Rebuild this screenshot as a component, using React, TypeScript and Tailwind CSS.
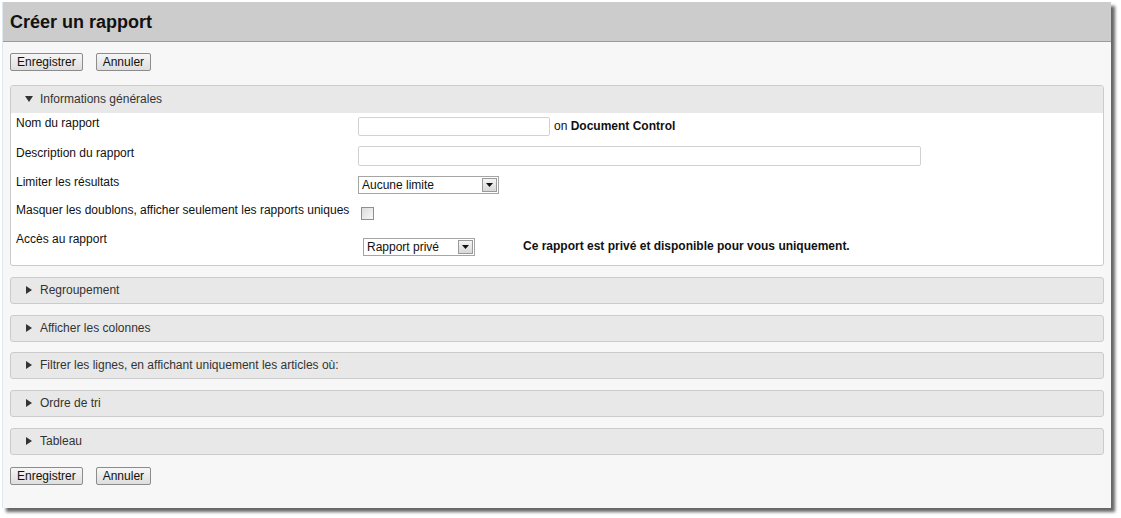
import React from "react";

const font = { fontFamily: '"Liberation Sans", Arial, sans-serif' };

function Btn({ children }: { children: React.ReactNode }) {
  return (
    <button className="h-[18px] px-[6px] text-[12px] leading-[14px] text-[#111] border border-[#8c8c8c] rounded-[2px] bg-gradient-to-b from-[#f6f6f6] to-[#dedede]">
      {children}
    </button>
  );
}

function Select({ label, w }: { label: string; w: string }) {
  return (
    <div className={`${w} h-[18px] flex items-center justify-between border border-[#a5a5a5] bg-white pl-[3px] pr-[1px]`}>
      <span className="text-[12px] leading-[14px] text-[#111]">{label}</span>
      <span className="w-[15px] h-[14px] border border-[#9a9a9a] bg-gradient-to-b from-[#f4f4f4] to-[#d8d8d8] flex items-center justify-center">
        <svg width="7" height="4" viewBox="0 0 7 4"><path d="M0 0h7L3.5 4z" fill="#111" /></svg>
      </span>
    </div>
  );
}

function Collapsed({ title, mt }: { title: string; mt: string }) {
  return (
    <div className={`${mt} h-[27px] border border-[#cbcbcb] rounded-[3px] bg-[#e8e8e8] flex items-center pl-[15px] pb-[1px]`}>
      <svg width="6" height="8" viewBox="0 0 6 8" className="mr-[8px]"><path d="M0 0L6 4L0 8z" fill="#333" /></svg>
      <span className="text-[12px] text-[#333] leading-[14px]">{title}</span>
    </div>
  );
}

export default function App() {
  return (
    <div className="bg-white w-[1121px] h-[518px] pt-[2px] pl-[2px]" style={font}>
      <div className="w-[1109px] h-[506px] bg-[#f7f7f7] border-l border-[#dfe6ee] shadow-[4px_4px_3px_rgba(0,0,0,0.6)] flex flex-col">
        <div className="h-[40px] bg-[#cccccc] border-b border-[#9a9a9a] flex items-center pl-[7px]">
          <h1 className="text-[18px] font-bold text-[#111] leading-[20px]">Créer un rapport</h1>
        </div>
        <div className="pl-[7px] pr-[7px]">
          <div className="mt-[11px] flex gap-[13px]">
            <Btn>Enregistrer</Btn>
            <Btn>Annuler</Btn>
          </div>

          <div className="mt-[14px] border border-[#cbcbcb] rounded-[3px] bg-white overflow-hidden">
            <div className="h-[27px] bg-[#e8e8e8] flex items-center pl-[14px] pb-[2px]">
              <svg width="8" height="6" viewBox="0 0 8 6" className="mr-[7px] mt-[1px]"><path d="M0 0h8L4 6z" fill="#333" /></svg>
              <span className="text-[12px] text-[#333] leading-[14px]">Informations générales</span>
            </div>
            <div className="pl-[5px] text-[12px] leading-[14px] text-[#111]">
              <div className="h-[30px] flex items-start">
                <div className="w-[342px] mt-[3px]">Nom du rapport</div>
                <div className="mt-[4px] w-[192px] h-[19px] border border-[#d2d2d2] rounded-[2px] bg-white" />
                <div className="mt-[6px] ml-[4px]">on <b>Document Control</b></div>
              </div>
              <div className="h-[30px] flex items-start">
                <div className="w-[342px] mt-[3px]">Description du rapport</div>
                <div className="mt-[3px] w-[563px] h-[20px] border border-[#d2d2d2] rounded-[2px] bg-white" />
              </div>
              <div className="h-[29px] flex items-start">
                <div className="w-[342px] mt-[2px]">Limiter les résultats</div>
                <div className="mt-[3px]"><Select label="Aucune limite" w="w-[141px]" /></div>
              </div>
              <div className="h-[29px] flex items-start">
                <div className="w-[342px] mt-[1px]">Masquer les doublons, afficher seulement les rapports uniques</div>
                <div className="mt-[5px] ml-[3px] w-[13px] h-[13px] border border-[#8f8f8f] bg-gradient-to-br from-[#dcdcdc] to-[#f8f8f8]" />
              </div>
              <div className="h-[34px] flex items-start">
                <div className="w-[342px] mt-[1px]">Accès au rapport</div>
                <div className="mt-[7px] ml-[5px]"><Select label="Rapport privé" w="w-[112px]" /></div>
                <div className="mt-[8px] ml-[48px] font-bold">Ce rapport est privé et disponible pour vous uniquement.</div>
              </div>
            </div>
          </div>

          <Collapsed mt="mt-[11px]" title="Regroupement" />
          <Collapsed mt="mt-[11px]" title="Afficher les colonnes" />
          <Collapsed mt="mt-[10px]" title="Filtrer les lignes, en affichant uniquement les articles où:" />
          <Collapsed mt="mt-[11px]" title="Ordre de tri" />
          <Collapsed mt="mt-[11px]" title="Tableau" />

          <div className="mt-[12px] flex gap-[13px]">
            <Btn>Enregistrer</Btn>
            <Btn>Annuler</Btn>
          </div>
        </div>
      </div>
    </div>
  );
}
